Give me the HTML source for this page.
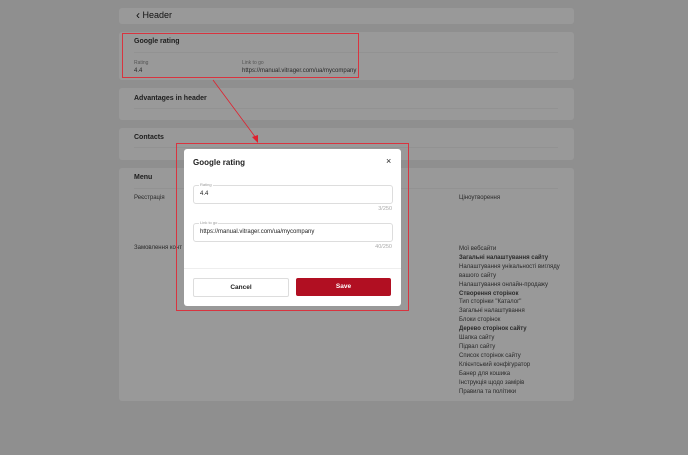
<!DOCTYPE html>
<html><head><meta charset="utf-8"><style>
body{margin:0;width:688px;height:455px;background:#8f8f8f;font-family:"Liberation Sans","DejaVu Sans",sans-serif;position:relative;overflow:hidden;color:#222}
.card{position:absolute;left:119px;width:455px;background:#999;border-radius:3px}
.t{position:absolute;white-space:nowrap}
.hr{position:absolute;left:15px;width:424px;height:1px;background:#929292}
.s{font-size:6px;color:#2a2a2a}
.b{font-size:7px;font-weight:bold;color:#1d1d1d}
.modal{position:absolute;left:184px;top:149px;width:217px;height:157px;background:#fff;border-radius:3px}
.inp{position:absolute;left:9px;width:198px;height:17px;border:1px solid #ddd;border-radius:3px}
.lab{position:absolute;top:-4px;left:5px;background:#fff;font-size:4px;color:#999;padding:0 1px}
.btn{position:absolute;top:129px;height:18px;width:95px;border-radius:2px;font-size:6.5px;font-weight:bold;text-align:center;line-height:18px}
</style></head><body>
<div class="card" style="top:8px;height:16px"><div class="t" style="left:17px;top:2px;font-size:9px;color:#111"><span style="font-size:12px;line-height:9px;position:relative;top:1px">&#8249;</span> Header</div></div>
<div class="card" style="top:32px;height:48px">
<div class="t b" style="left:15px;top:6px">Google rating</div><div class="hr" style="top:20px"></div>
<div class="t s" style="left:15px;top:28px;color:#555;font-size:5px">Rating</div>
<div class="t s" style="left:15px;top:36px">4.4</div>
<div class="t s" style="left:123px;top:28px;color:#555;font-size:5px">Link to go</div>
<div class="t s" style="left:123px;top:36px">https://manual.vitrager.com/ua/mycompany</div></div>
<div class="card" style="top:88px;height:32px"><div class="t b" style="left:15px;top:7px">Advantages in header</div><div class="hr" style="top:20px"></div></div>
<div class="card" style="top:128px;height:32px"><div class="t b" style="left:15px;top:6px">Contacts</div><div class="hr" style="top:19px"></div></div>
<div class="card" style="top:168px;height:233px">
<div class="t b" style="left:15px;top:6px">Menu</div><div class="hr" style="top:20px"></div>
<div class="t s" style="left:15px;top:27px">Реєстрація</div>
<div class="t s" style="left:340px;top:27px">Ціноутворення</div>
<div class="t s" style="left:15px;top:77px">Замовлення конт</div>
<div class="t s" style="left:340px;top:77px;line-height:8.9px">Мої вебсайти<br><b>Загальні налаштування сайту</b><br>Налаштування унікальності вигляду<br>вашого сайту<br>Налаштування онлайн-продажу<br><b>Створення сторінок</b><br>Тип сторінки "Каталог"<br>Загальні налаштування<br>Блоки сторінок<br><b>Дерево сторінок сайту</b><br>Шапка сайту<br>Підвал сайту<br>Список сторінок сайту<br>Клієнтський конфігуратор<br>Банер для кошика<br>Інструкція щодо замірів<br>Правила та політики</div>
</div>
<div style="position:absolute;left:122px;top:33px;width:235px;height:43px;border:1px solid #d8343f"></div>
<div style="position:absolute;left:176px;top:143px;width:231px;height:166px;border:1px solid #d8343f"></div>
<svg style="position:absolute;left:0;top:0" width="688" height="455"><line x1="213" y1="80" x2="256" y2="138" stroke="#e0202e" stroke-width="0.8"/><polygon points="258,143 252,137 258,135" fill="#e0202e"/></svg>
<div class="modal">
<div class="t" style="left:9px;top:9px;font-size:8px;font-weight:bold;color:#222">Google rating</div>
<div class="t" style="left:202px;top:7px;font-size:9px;color:#222">×</div>
<div class="inp" style="top:36px"><span class="lab">Rating</span><div class="t" style="left:6px;top:5px;font-size:6px">4.4</div></div>
<div class="t" style="right:9px;top:57px;font-size:5.5px;color:#aaa">3/250</div>
<div class="inp" style="top:74px"><span class="lab">Link to go</span><div class="t" style="left:6px;top:5px;font-size:6px">https://manual.vitrager.com/ua/mycompany</div></div>
<div class="t" style="right:9px;top:95px;font-size:5.5px;color:#aaa">40/250</div>
<div style="position:absolute;left:0;right:0;top:119px;height:1px;background:#eee"></div>
<div class="btn" style="left:9px;border:1px solid #ddd;height:17px;line-height:17px;width:94px;color:#222">Cancel</div>
<div class="btn" style="left:112px;background:#b10f22;color:#fff">Save</div>
</div>
</body></html>
